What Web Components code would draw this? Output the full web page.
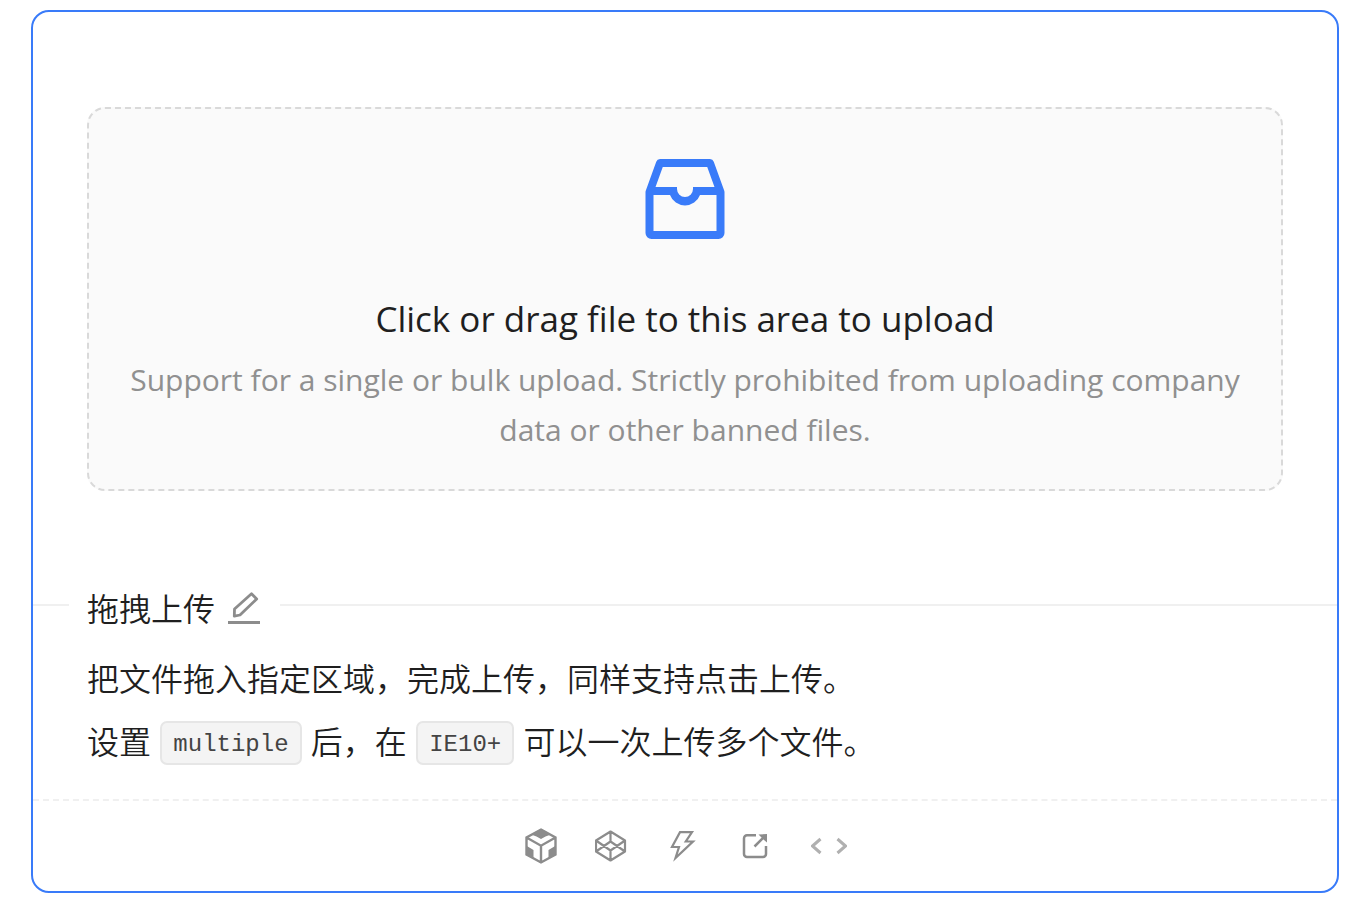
<!DOCTYPE html>
<html lang="zh-CN">
<head>
<meta charset="utf-8">
<title>拖拽上传</title>
<style>
  body {
    margin: 0;
    background: #fff;
    color: #1f1f1f;
    font-family: "Open Sans", "Noto Sans CJK SC", sans-serif;
    font-weight: 350;
    --primary: #397bf9;
    --line: #f0f0f0;
    --muted: #8c8c8c;
  }
</style>
</head>
<body>
<demo-card>
  <upload-dragger slot="demo">
    <span slot="text">Click or drag file to this area to upload</span>
    <span slot="hint">Support for a single or bulk upload. Strictly prohibited from uploading company data or other banned files.</span>
  </upload-dragger>
  <demo-title slot="title">拖拽上传</demo-title>
  <demo-description slot="description">
    <p>把文件拖入指定区域，完成上传，同样支持点击上传。</p>
    <p>设置 <inline-code>multiple</inline-code> 后，在 <inline-code>IE10+</inline-code> 可以一次上传多个文件。</p>
  </demo-description>
  <demo-actions slot="actions"></demo-actions>
</demo-card>

<script>
const define = (name, html) => customElements.define(name, class extends HTMLElement {
  constructor() {
    super();
    this.attachShadow({ mode: 'open' }).innerHTML = html;
  }
});

define('demo-card', `
  <style>
    :host { display: block; margin: 10px 26px 19px 31px; border: 2px solid var(--primary); border-radius: 18px; }
    .demo { padding: 95px 54px 90px; }
    .actions { border-top: 2px dashed var(--line); }
  </style>
  <section class="demo"><slot name="demo"></slot></section>
  <slot name="title"></slot>
  <slot name="description"></slot>
  <footer class="actions"><slot name="actions"></slot></footer>
`);

define('upload-dragger', `
  <style>
    :host { display: block; font-weight: 400; }
    label { display: block; position: relative; padding: 50px 32px 34px; border: 2px dashed #d9d9d9; border-radius: 18px; background: #fafafa; text-align: center; cursor: pointer; }
    input { position: absolute; inset: 0; width: 100%; height: 100%; margin: 0; opacity: 0; cursor: pointer; }
    svg { display: block; width: 80px; height: 80px; margin: 0 auto 52px; color: var(--primary); }
    .text, .hint { display: block; }
    .text { font-size: 35px; line-height: 56px; margin-bottom: 8px; }
    .hint { font-size: 30px; line-height: 50px; color: #909090; }
  </style>
  <label>
    <input type="file" multiple>
    <svg viewBox="0 0 80 80" aria-hidden="true">
      <path fill="none" stroke="currentColor" stroke-width="8" stroke-linejoin="round" d="M4.500 33V74a2 2 0 0 0 2 2H73.500a2 2 0 0 0 2-2V33L65 4H15Z"/>
      <path fill="currentColor" d="M4 28H32v2a8 8 0 0 0 16 0v-2H76v8H55a16 16 0 0 1-30 0H4Z"/>
    </svg>
    <span class="text"><slot name="text"></slot></span>
    <span class="hint"><slot name="hint"></slot></span>
  </label>
`);

define('demo-title', `
  <style>
    :host { display: flex; align-items: center; font-size: 32px; line-height: 40px; }
    :host::before, :host::after { content: ""; height: 2px; background: var(--line); }
    :host::before { width: 36px; }
    :host::after { flex: 1; }
    h2 { display: flex; align-items: center; gap: 13px; margin: 0; padding: 8px 20px 0 18px; font: inherit; }
    a { padding-bottom: 4px; color: var(--muted); }
    svg { display: block; width: 32px; height: 34px; }
  </style>
  <h2><slot></slot>
    <a href="#edit" aria-label="Edit">
      <svg viewBox="0 0 32 34" fill="none" stroke="currentColor">
        <path stroke-width="2.8" stroke-linejoin="round" d="M6.500 19 23.500 3.700l5.200 5.200L12 25l-5.700 1.200Z"/>
        <path stroke-width="3" d="M0 32.500h32"/>
      </svg>
    </a>
  </h2>
`);

define('demo-description', `
  <style>
    :host { display: block; padding: 18px 54px 26px; font-size: 32px; line-height: 63px; }
    ::slotted(p) { margin: 0; }
  </style>
  <slot></slot>
`);

define('inline-code', `
  <style>
    :host { display: inline-block; margin: 0 1px; vertical-align: 3px; }
    code { display: block; padding: 3px 11px 0; border: 2px solid #e6e6e6; border-radius: 7px; background: #f4f4f4; color: #444; font-family: "Liberation Mono", monospace; font-size: 24px; line-height: 37px; }
  </style>
  <code><slot></slot></code>
`);

define('demo-actions', `
  <style>
    :host { display: flex; justify-content: center; gap: 36px; padding: 27px 0; color: var(--muted); }
    button { display: block; width: 36px; height: 36px; padding: 0; border: 0; background: none; color: inherit; cursor: pointer; }
    svg { display: block; width: 36px; height: 36px; fill: none; stroke: currentColor; }
  </style>
  <button type="button" aria-label="CodeSandbox"><svg viewBox="0 0 36 36">
    <path stroke-width="2.400" d="M18 1.500 32.500 9.500V26.500L18 34.500 3.500 26.500V9.500ZM3.500 9.500 18 17.700 32.500 9.500M18 17.700V34"/>
    <path fill="currentColor" stroke="none" d="M18 1 28 6.500 22.500 8.500 18 11 13.500 8.500 8 6.500ZM3 17.500 10.500 22V30.500L3 26.500ZM33 17.500 25.500 22V30.500L33 26.500Z"/>
  </svg></button>
  <button type="button" aria-label="CodePen"><svg viewBox="0 0 36 36">
    <path stroke-width="2.200" stroke-linejoin="round" d="M15.500 3.500 30 12.500V23.500L15.500 32.500 1 23.500V12.500ZM1 12.500 15.500 22.500 30 12.500M1 23.500 15.500 13.500 30 23.500M15.500 3.500V13.500M15.500 22.500V32.500"/>
  </svg></button>
  <button type="button" aria-label="StackBlitz"><svg viewBox="0 0 36 36">
    <path stroke-width="2.200" d="M13 4.200H25L18.800 13.500H26L8.500 30 12 19H5Z"/>
  </svg></button>
  <button type="button" aria-label="Open in new window"><svg viewBox="0 0 36 36">
    <path stroke-width="2.500" d="M17 7.200H8a3 3 0 0 0-3 3V26a3 3 0 0 0 3 3H24a3 3 0 0 0 3-3V18M15.500 18.500 26 8"/>
    <path fill="currentColor" stroke="none" d="M19.500 6.500 28 6V14.500L25 12 22 9Z"/>
  </svg></button>
  <button type="button" aria-label="Show code"><svg viewBox="0 0 36 36">
    <path stroke="#b0b0b0" stroke-width="3" d="M9.500 11 1.500 18 9.500 25M26.500 11 34.500 18 26.500 25"/>
  </svg></button>
`);
</script>
</body>
</html>
